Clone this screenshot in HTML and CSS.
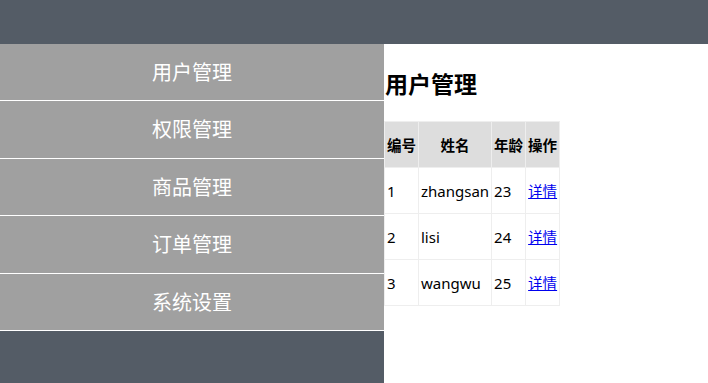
FILE: index.html
```html
<!DOCTYPE html>
<html lang="zh-CN">
<head>
    <meta charset="UTF-8">
    <meta name="viewport" content="width=device-width, initial-scale=1.0">
    <title>用户管理</title>
    <link rel="stylesheet" href="styles.css">
</head>
<body>

<div class="header"></div>

<div class="layout">
    <!-- 左侧菜单 -->
    <ul class="menu">
        <li>用户管理</li>
        <li>权限管理</li>
        <li>商品管理</li>
        <li>订单管理</li>
        <li>系统设置</li>
    </ul>

    <!-- 右侧内容 -->
    <div class="main">
        <h2>用户管理</h2>
        <table class="user-table">
            <tr>
                <th>编号</th>
                <th class="col-name">姓名</th>
                <th>年龄</th>
                <th>操作</th>
            </tr>
            <tr>
                <td>1</td>
                <td>zhangsan</td>
                <td>23</td>
                <td><a href="#">详情</a></td>
            </tr>
            <tr>
                <td>2</td>
                <td>lisi</td>
                <td>24</td>
                <td><a href="#">详情</a></td>
            </tr>
            <tr>
                <td>3</td>
                <td>wangwu</td>
                <td>25</td>
                <td><a href="#">详情</a></td>
            </tr>
        </table>
    </div>
</div>

</body>
</html>
```

FILE: styles.css
```css
* {
    margin: 0;
    padding: 0;
    box-sizing: border-box;
}

html, body {
    height: 100%;
}

body {
    font-family: "Noto Sans", "Noto Sans CJK SC", sans-serif;
    background-color: #545c66;
    display: flex;
    flex-direction: column;
}

.header {
    height: 44px;
    background-color: #545c66;
}

.layout {
    flex: 1;
    display: flex;
}

/* 左侧菜单 */
.menu {
    width: 384px;
    list-style: none;
}

.menu li {
    height: 57.4px;
    line-height: 56px;
    border-bottom: 1px solid #fff;
    background-color: #a0a0a0;
    color: #fff;
    font-family: "Noto Sans CJK SC", sans-serif;
    font-size: 20px;
    text-align: center;
}

/* 右侧内容 */
.main {
    flex: 1;
    background-color: #fff;
}

h2 {
    font-family: "Noto Sans CJK SC", sans-serif;
    font-size: 23px;
    line-height: 30px;
    margin: 24px 0 23px 1px;
}

.user-table {
    border-collapse: collapse;
    font-size: 15px;
    color: #000;
}

.user-table th,
.user-table td {
    border: 1px solid #eee;
    height: 46px;
    padding: 0 2px;
    vertical-align: middle;
    white-space: nowrap;
}

.user-table th {
    background-color: #ddd;
    font-family: "Noto Sans CJK SC", sans-serif;
    font-size: 14.5px;
    font-weight: bold;
    text-align: center;
}

.user-table td {
    text-align: left;
}

.user-table a {
    color: #0000ee;
    font-family: "Noto Sans CJK SC", sans-serif;
    font-size: 14.5px;
}

.col-name {
    width: 72px;
}
```
